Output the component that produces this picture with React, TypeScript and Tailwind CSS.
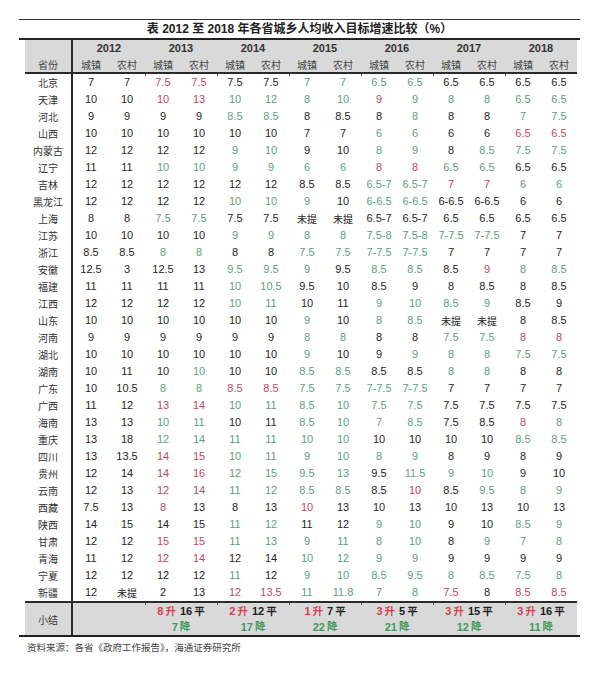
import React from 'react';

const NUM = "[font-family:'Liberation_Sans','Noto_Sans_CJK_SC',sans-serif]";
const CJK = "[font-family:'Noto_Sans_CJK_SC',sans-serif]";

const years = ['2012', '2013', '2014', '2015', '2016', '2017', '2018'];

const rows: [string, string][] = [
  ['北京', '7 7 7.5r 7.5r 7.5 7.5 7g 7g 6.5g 6.5g 6.5 6.5 6.5 6.5'],
  ['天津', '10 10 10r 13r 10g 12g 8g 10g 9r 9g 8g 8g 6.5g 6.5g'],
  ['河北', '9 9 9 9 8.5g 8.5g 8 8.5 8 8g 8 8 7g 7.5g'],
  ['山西', '10 10 10 10 10 10 7 7 6g 6g 6 6 6.5r 6.5r'],
  ['内蒙古', '12 12 12 12 9g 10g 9 10 8g 9g 8 8.5g 7.5g 7.5g'],
  ['辽宁', '11 11 10g 10g 9g 9g 6g 6g 8r 8r 6.5g 6.5g 6.5 6.5'],
  ['吉林', '12 12 12 12 12 12 8.5 8.5 6.5-7g 6.5-7g 7r 7r 6g 6g'],
  ['黑龙江', '12 12 12 12 10g 10g 9g 10 6-6.5g 6-6.5g 6-6.5 6-6.5 6 6'],
  ['上海', '8 8 7.5g 7.5g 7.5 7.5 未提 未提 6.5-7 6.5-7 6.5 6.5 6.5 6.5'],
  ['江苏', '10 10 10 10 9g 9g 8g 8g 7.5-8g 7.5-8g 7-7.5g 7-7.5g 7 7'],
  ['浙江', '8.5 8.5 8g 8g 8 8 7.5g 7.5g 7-7.5g 7-7.5g 7 7 7 7'],
  ['安徽', '12.5 3 12.5 13 9.5g 9.5g 9g 9.5 8.5g 8.5g 8.5 9r 8g 8.5g'],
  ['福建', '11 11 11 11 10g 10.5g 9.5 10 8.5 9 8 8.5 8 8.5'],
  ['江西', '12 12 12 12 10g 11g 10 11 9g 10g 8.5g 9g 8.5 9'],
  ['山东', '10 10 10 10 10 10 9g 10 8g 8.5g 未提 未提 8 8.5'],
  ['河南', '9 9 9 9 9 9 8g 8g 8 8 7.5g 7.5g 8r 8r'],
  ['湖北', '10 10 10 10 10 10 9g 10 9 9g 8g 8g 7.5g 7.5g'],
  ['湖南', '10 11 10 10g 10 10 8.5g 8.5g 8.5 8.5 8g 8g 8 8'],
  ['广东', '10 10.5 8g 8g 8.5r 8.5r 7.5g 7.5g 7-7.5g 7-7.5g 7 7 7 7'],
  ['广西', '11 12 13r 14r 10g 11g 8.5g 10g 7.5g 7.5g 7.5 7.5 7.5 7.5'],
  ['海南', '13 13 10g 11g 10 11 8.5g 10g 7g 8.5g 7.5 8.5 8r 8g'],
  ['重庆', '13 18 12g 14g 11g 11g 10g 10g 10 10 10 10 8.5g 8.5g'],
  ['四川', '13 13.5 14r 15r 10g 11g 9g 10g 8g 9g 8 9 8 9'],
  ['贵州', '12 14 14r 16r 12g 15g 9.5g 13g 9.5 11.5g 9g 10g 9 10'],
  ['云南', '12 13 12r 14r 11g 12g 8.5g 8.5g 8.5 10r 8.5 9.5g 8g 9g'],
  ['西藏', '7.5 13 8r 13 8 13 10r 13 10 13 10 13 10 13'],
  ['陕西', '14 15 14 15 11g 12g 11 12 9g 10g 9 10 8.5g 9g'],
  ['甘肃', '12 12 15r 15r 11g 13g 9g 11g 8g 10g 8 9g 7g 8g'],
  ['青海', '11 12 12r 14r 12 14 10g 12g 9g 9g 9 9 9 9'],
  ['宁夏', '12 12 12 12 11g 12 9g 10g 8.5g 9.5g 8g 8.5g 7.5g 8g'],
  ['新疆', '12 未提 2 13 12r 13.5r 11g 11.8g 7g 8g 7.5r 8 8.5r 8.5r'],
];

// 升 / 平 / 降
const summary = [
  ['8', '16', '7'],
  ['2', '12', '17'],
  ['1', '7', '22'],
  ['3', '5', '21'],
  ['3', '15', '12'],
  ['3', '16', '11'],
];

const tickLefts = ['left-[120px]', 'left-[192px]', 'left-[264px]', 'left-[336px]', 'left-[408px]', 'left-[480px]'];

function Cell({ v }: { v: string }) {
  const last = v.slice(-1);
  let text = v;
  let color = 'text-[#262626]';
  if (last === 'g') {
    text = v.slice(0, -1);
    color = 'text-[#5c9f80]';
  } else if (last === 'r') {
    text = v.slice(0, -1);
    color = 'text-[#c2475f]';
  }
  const cjk = text === '未提';
  return (
    <div
      className={`w-[36px] flex items-center justify-center ${color} ${
        cjk ? `${CJK} text-[10px]` : `${NUM} text-[11px]`
      }`}
    >
      {text}
    </div>
  );
}

function Line({ ticks }: { ticks?: boolean }) {
  return (
    <div className="relative h-[2px] bg-[#2a2a2a]">
      {ticks &&
        tickLefts.map((l) => (
          <div key={l} className={`absolute top-[2px] ${l} w-px h-[2px] bg-[#555]`} />
        ))}
    </div>
  );
}

export default function App() {
  return (
    <div className="w-[600px] h-[675px] bg-white pt-[19px] pl-[19px] text-[#262626]">
      <div className="w-[561px]">
        <div className="h-px bg-[#333]" />
        <div className={`h-[18px] flex items-center justify-center font-bold text-[12px] text-[#222] ${NUM}`}>
          表 2012 至 2018 年各省城乡人均收入目标增速比较（%）
        </div>
        <div className="h-[2px] bg-[#222]" />

        <div className="pl-[6px] pr-[3px]">
          {/* header */}
          <div className="flex bg-[#d9d9d9]">
            <div className="w-[48px] border-r-2 border-[#2a2a2a] flex flex-col">
              <div className="h-[17px]" />
              <div className={`h-[15px] flex items-center justify-center text-[10px] text-[#444] ${CJK}`}>省份</div>
            </div>
            <div className="flex flex-col">
              <div className="flex h-[17px]">
                {years.map((y) => (
                  <div
                    key={y}
                    className={`w-[72px] flex items-center justify-center font-bold text-[11px] text-[#333] ${NUM}`}
                  >
                    {y}
                  </div>
                ))}
              </div>
              <div className="flex h-[15px]">
                {years.map((y) => (
                  <React.Fragment key={y}>
                    <div className={`w-[36px] flex items-center justify-center text-[10px] text-[#444] ${CJK}`}>城镇</div>
                    <div className={`w-[36px] flex items-center justify-center text-[10px] text-[#444] ${CJK}`}>农村</div>
                  </React.Fragment>
                ))}
              </div>
            </div>
          </div>
          <Line ticks />

          {/* data */}
          {rows.map(([name, vals]) => (
            <div key={name} className="flex h-[17px]">
              <div
                className={`w-[48px] border-r-2 border-[#2a2a2a] flex items-center justify-center text-[10px] text-[#333] ${CJK}`}
              >
                {name}
              </div>
              {vals.split(' ').map((v, i) => (
                <Cell key={i} v={v} />
              ))}
            </div>
          ))}

          <Line ticks />

          {/* summary */}
          <div className="flex h-[32px] bg-[#d9d9d9]">
            <div
              className={`w-[48px] border-r-2 border-[#2a2a2a] flex items-center justify-center text-[10px] text-[#333] ${CJK}`}
            >
              小结
            </div>
            <div className="w-[72px]" />
            {summary.map(([up, flat, down], i) => (
              <div key={i} className={`w-[72px] flex flex-col font-bold text-[11px] ${NUM}`}>
                <div className="h-[16px] flex items-center justify-center">
                  <span className="text-[#d6404f]">
                    {up}
                    <span className="ml-[2px] text-[10.5px]">升</span>
                  </span>
                  <span className="ml-[4px] text-[#222]">
                    {flat}
                    <span className="ml-[2px] text-[10.5px]">平</span>
                  </span>
                </div>
                <div className="h-[16px] flex items-center justify-center text-[#3c9a5c]">
                  {down}
                  <span className="ml-[2px] text-[10.5px]">降</span>
                </div>
              </div>
            ))}
          </div>
        </div>

        <div className="h-[2px] bg-[#222]" />
        <div className={`pl-[8px] pt-[3px] h-[14px] leading-[14px] text-[9.5px] text-[#444] ${CJK}`}>
          资料来源：各省《政府工作报告》，海通证券研究所
        </div>
      </div>
    </div>
  );
}
